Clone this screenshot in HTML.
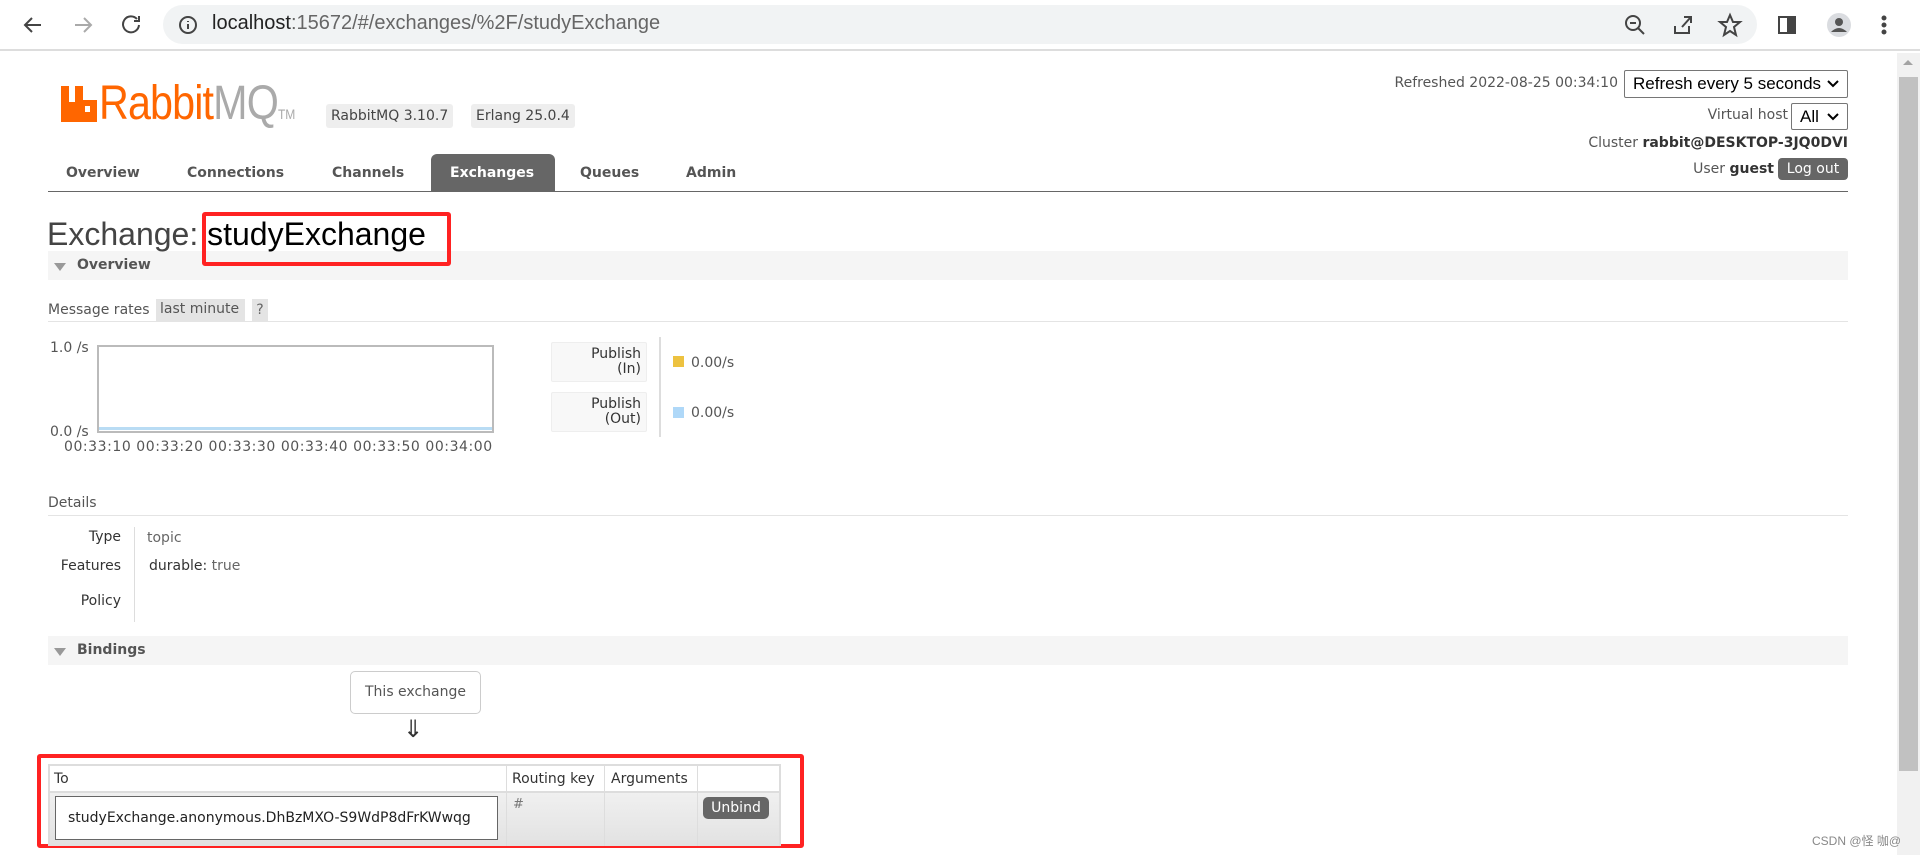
<!DOCTYPE html>
<html><head><meta charset="utf-8"><style>
*{margin:0;padding:0;box-sizing:border-box}
body{width:1920px;height:855px;overflow:hidden;background:#fff;font-family:"DejaVu Sans","Liberation Sans",sans-serif;font-size:14px;color:#444;position:relative}
.a{position:absolute;white-space:nowrap}
.sel{position:absolute;border:1px solid #767676;border-radius:2px;background:#fff;font-family:"Liberation Sans",sans-serif;font-size:17px;color:#000;padding:3px 8px}
.sel svg{position:absolute;right:8px;top:9px}
.bar{position:absolute;left:48px;width:1800px;background:#f5f5f5}
.tri{position:absolute;width:0;height:0;border-left:6px solid transparent;border-right:6px solid transparent;border-top:8px solid #999}
.nav{position:absolute;top:155px;height:37px;line-height:37px;font-weight:bold;font-size:14px;color:#555}
</style></head><body>
<div class="a" style="left:0;top:0;width:1920px;height:51px;background:#fff;border-bottom:2px solid #ddd"></div>
<svg class="a" style="left:20px;top:12px" width="130" height="26" viewBox="0 0 130 26" fill="none" stroke-width="2">
<path d="M21 13H6M12 6l-7 7 7 7" stroke="#444"/>
<path d="M55 13h15M64 6l7 7-7 7" stroke="#aaa"/>
<path d="M117 7a8 8 0 1 0 2 6M119 4v5h-5" stroke="#444"/>
</svg>
<div class="a" style="left:163px;top:5px;width:1594px;height:39px;border-radius:20px;background:#f1f3f4"></div>
<svg class="a" style="left:178px;top:15px" width="20" height="20" viewBox="0 0 20 20"><circle cx="10" cy="10" r="8" fill="none" stroke="#444" stroke-width="2"/><path d="M10 9v5M10 6v1" stroke="#444" stroke-width="2"/></svg>
<div class="a" style="left:212px;top:12px;font-family:'Liberation Sans',sans-serif;font-size:20px;color:#222">localhost<span style="color:#666">:15672/#/exchanges/%2F/studyExchange</span></div>
<svg class="a" style="left:1620px;top:12px" width="290" height="26" viewBox="0 0 290 26" fill="none" stroke="#444" stroke-width="2">
<circle cx="13" cy="11" r="7"/><path d="M18 16l6 6M10 11h6"/>
<path d="M55 14v7h14v-7M62 15l8-9M64 5h7v6"/>
<path d="M110 3l3 7h7l-6 5 2 8-6-4-6 4 2-8-6-5h7z"/>
<rect x="159" y="5" width="16" height="16"/><rect x="168" y="5" width="7" height="16" fill="#444"/>
<circle cx="219" cy="13" r="12" fill="#dadce0" stroke="none"/><circle cx="219" cy="10" r="4" fill="#555" stroke="none"/><path d="M211 20q8-8 16 0" fill="#555" stroke="none"/>
<circle cx="264" cy="6" r="1.5" fill="#444"/><circle cx="264" cy="13" r="1.5" fill="#444"/><circle cx="264" cy="20" r="1.5" fill="#444"/>
</svg>
<div class="a" style="left:1897px;top:53px;width:23px;height:802px;background:#f1f1f1"></div>
<div class="a" style="left:1899px;top:77px;width:19px;height:694px;background:#c1c1c1"></div>
<div class="a" style="left:1903px;top:60px;width:0;height:0;border-left:5px solid transparent;border-right:5px solid transparent;border-bottom:5px solid #a3a3a3"></div>
<svg class="a" style="left:61px;top:86px" width="36" height="36" viewBox="0 0 36 36"><path d="M0 0h8v16h6V0h8v14h14v22H0z" fill="#f60"/><rect x="24" y="20" width="5" height="6" fill="#fff"/></svg>
<div class="a" style="left:99px;top:76px;font-family:'Liberation Sans',sans-serif;font-size:48px;letter-spacing:-1px;color:#f60;transform:scaleX(0.86);transform-origin:0 0">Rabbit<span style="color:#aaa">MQ</span><span style="font-size:14px;color:#aaa;letter-spacing:0">TM</span></div>
<div class="a" style="left:326px;top:104px;height:24px;line-height:24px;padding:0 5px;background:#eee;border-radius:3px;font-size:14px;color:#444">RabbitMQ 3.10.7</div>
<div class="a" style="left:471px;top:104px;height:24px;line-height:24px;padding:0 5px;background:#eee;border-radius:3px;font-size:14px;color:#444">Erlang 25.0.4</div>
<div class="a" style="right:302px;top:75px;font-size:14px;color:#555">Refreshed 2022-08-25 00:34:10</div>
<div class="sel" style="left:1624px;top:70px;width:224px;height:28px">Refresh every 5 seconds<svg width="12" height="8"><path d="M1 1l5 5 5-5" stroke="#000" stroke-width="2" fill="none"/></svg></div>
<div class="a" style="right:132px;top:107px;font-size:14px;color:#555">Virtual host</div>
<div class="sel" style="left:1791px;top:103px;width:57px;height:27px">All<svg width="12" height="8"><path d="M1 1l5 5 5-5" stroke="#000" stroke-width="2" fill="none"/></svg></div>
<div class="a" style="right:72px;top:135px;font-size:14px;color:#555">Cluster <b style="color:#333">rabbit@DESKTOP-3JQ0DVI</b></div>
<div class="a" style="right:146px;top:161px;font-size:14px;color:#555">User <b style="color:#333">guest</b></div>
<div class="a" style="left:1778px;top:158px;width:70px;height:22px;line-height:22px;text-align:center;background:#666;color:#fff;border-radius:4px;font-size:14px">Log out</div>
<div class="a" style="left:431px;top:154px;width:124px;height:37px;background:#666;border-radius:6px 6px 0 0"></div>
<div class="nav" style="left:66px">Overview</div>
<div class="nav" style="left:187px">Connections</div>
<div class="nav" style="left:332px">Channels</div>
<div class="nav" style="left:450px;color:#fff">Exchanges</div>
<div class="nav" style="left:580px">Queues</div>
<div class="nav" style="left:686px">Admin</div>
<div class="a" style="left:48px;top:191px;width:1800px;height:1px;background:#666"></div>
<div class="bar" style="top:251px;height:29px"></div>
<div class="a" style="left:47px;top:216px;font-size:32px;color:#444;font-family:'Liberation Sans',sans-serif">Exchange: <span style="color:#000">studyExchange</span></div>
<div class="a" style="left:202px;top:212px;width:249px;height:54px;border:4px solid #f22;border-radius:3px"></div>
<div class="tri" style="left:54px;top:263px"></div>
<div class="a" style="left:77px;top:257px;font-weight:bold;font-size:14px;color:#555">Overview</div>
<div class="a" style="left:48px;top:302px;font-size:14px;color:#555">Message rates</div>
<div class="a" style="left:156px;top:299px;width:89px;height:22px;background:#e4e4e4"></div>
<div class="a" style="left:160px;top:301px;font-size:14px;color:#555">last minute</div>
<div class="a" style="left:252px;top:299px;width:16px;height:22px;background:#e4e4e4;text-align:center;line-height:22px;font-size:14px;color:#666">?</div>
<div class="a" style="left:48px;top:321px;width:1800px;height:1px;background:#e4e4e4"></div>
<div class="a" style="left:97px;top:345px;width:397px;height:88px;border:2px solid #bbb;background:#fff"></div>
<div class="a" style="left:99px;top:427px;width:393px;height:3px;background:#b9dcf4"></div>
<div class="a" style="left:50px;top:340px;font-size:14px;color:#555">1.0 /s</div>
<div class="a" style="left:50px;top:424px;font-size:14px;color:#555">0.0 /s</div>
<div class="a" style="left:64px;top:439px;font-size:14px;color:#555;letter-spacing:0.55px">00:33:10 00:33:20 00:33:30 00:33:40 00:33:50 00:34:00</div>
<div class="a" style="left:551px;top:342px;width:96px;height:40px;background:#f8f8f8;border:1px solid #eee;border-radius:2px;text-align:right;padding:4px 5px;font-size:14px;line-height:15px;color:#333">Publish<br>(In)</div>
<div class="a" style="left:551px;top:392px;width:96px;height:40px;background:#f8f8f8;border:1px solid #eee;border-radius:2px;text-align:right;padding:4px 5px;font-size:14px;line-height:15px;color:#333">Publish<br>(Out)</div>
<div class="a" style="left:659px;top:337px;width:2px;height:100px;background:#ddd"></div>
<div class="a" style="left:673px;top:356px;width:11px;height:11px;background:#edc240"></div>
<div class="a" style="left:673px;top:407px;width:11px;height:11px;background:#afd8f8"></div>
<div class="a" style="left:691px;top:355px;font-size:14px;color:#555">0.00/s</div>
<div class="a" style="left:691px;top:405px;font-size:14px;color:#555">0.00/s</div>
<div class="a" style="left:48px;top:495px;font-size:14px;color:#555">Details</div>
<div class="a" style="left:48px;top:515px;width:1800px;height:1px;background:#e4e4e4"></div>
<div class="a" style="right:1799px;top:529px;font-size:14px;color:#333">Type</div>
<div class="a" style="right:1799px;top:558px;font-size:14px;color:#333">Features</div>
<div class="a" style="right:1799px;top:593px;font-size:14px;color:#333">Policy</div>
<div class="a" style="left:134px;top:527px;width:1px;height:95px;background:#ddd"></div>
<div class="a" style="left:147px;top:530px;font-size:14px;color:#666">topic</div>
<div class="a" style="left:149px;top:558px;font-size:14px;color:#333">durable: <span style="color:#666">true</span></div>
<div class="bar" style="top:636px;height:29px"></div>
<div class="tri" style="left:54px;top:648px"></div>
<div class="a" style="left:77px;top:642px;font-weight:bold;font-size:14px;color:#555">Bindings</div>
<div class="a" style="left:350px;top:671px;width:131px;height:43px;border:1px solid #ccc;border-radius:5px;text-align:center;line-height:41px;font-size:14px;color:#555">This exchange</div>
<div class="a" style="left:403px;top:715px;font-size:24px;color:#333">⇓</div>
<div class="a" style="left:37px;top:754px;width:767px;height:94px;border:4px solid #f22;border-radius:3px"></div>
<div class="a" style="left:48px;top:764px;width:733px;height:82px;border:2px solid #ddd;border-bottom:none;background:#fff"></div>
<div class="a" style="left:50px;top:792px;width:729px;height:54px;background:linear-gradient(#f0f0f0,#e2e2e2)"></div>
<div class="a" style="left:50px;top:791px;width:729px;height:2px;background:#ddd"></div>
<div class="a" style="left:506px;top:766px;width:1px;height:80px;background:#ddd"></div>
<div class="a" style="left:604px;top:766px;width:1px;height:80px;background:#ddd"></div>
<div class="a" style="left:697px;top:766px;width:1px;height:80px;background:#ddd"></div>
<div class="a" style="left:54px;top:771px;font-size:14px;color:#333">To</div>
<div class="a" style="left:512px;top:771px;font-size:14px;color:#333">Routing key</div>
<div class="a" style="left:611px;top:771px;font-size:14px;color:#333">Arguments</div>
<div class="a" style="left:55px;top:796px;width:443px;height:44px;border:1px solid #666;background:#fff;line-height:42px;padding-left:12px;font-size:14px;color:#222">studyExchange.anonymous.DhBzMXO-S9WdP8dFrKWwqg</div>
<div class="a" style="left:513px;top:797px;font-size:13px;color:#777">#</div>
<div class="a" style="left:703px;top:797px;width:66px;height:22px;border-radius:5px;background:#666;color:#fff;text-align:center;line-height:22px;font-size:14px">Unbind</div>
<div class="a" style="left:1812px;top:832px;font-family:'Liberation Sans','Noto Sans CJK SC',sans-serif;font-size:12px;color:#888">CSDN @怪 咖@</div>
</body></html>
